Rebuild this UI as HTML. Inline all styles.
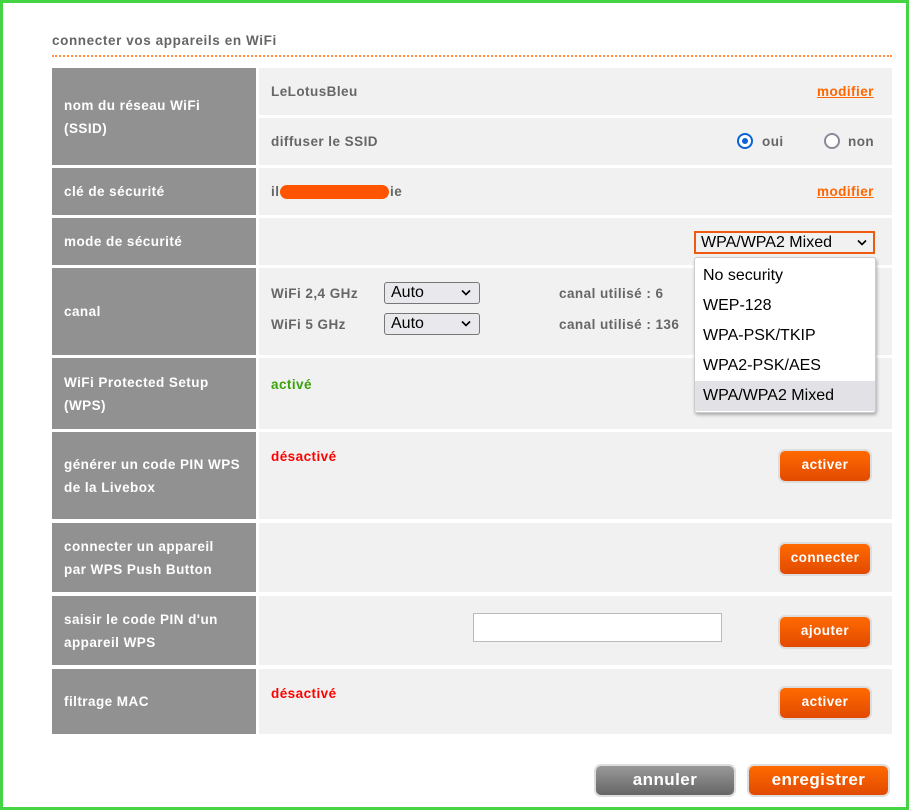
<!DOCTYPE html>
<html><head><meta charset="utf-8"><style>
*{margin:0;padding:0;box-sizing:border-box}
body{width:909px;height:810px;position:relative;background:#fff;font-family:"Liberation Sans",Arial,sans-serif;font-weight:bold;font-size:13.5px;letter-spacing:0.45px;overflow:hidden}
.frame{position:absolute;left:0;top:0;width:909px;height:810px;border:3px solid #44d444}
.a{position:absolute}
.l{position:absolute;left:52px;width:204px;background:#919191;color:#fff;padding-left:12px;line-height:23px;display:flex;align-items:center}
.v{position:absolute;left:259px;width:633px;background:#f1f1f1}
.t{position:absolute;color:#666;white-space:nowrap}
.lnk{position:absolute;color:#ff6600;text-decoration:underline;font-size:13.5px}
.btn{position:absolute;width:90px;height:30px;border-radius:5px;background:linear-gradient(#ff6a00,#e24a00);color:#fff;text-align:center;line-height:28px;font-size:13.5px;box-shadow:0 0 0 2px #ddd}
.sel{position:absolute;width:96px;height:22px;border:1px solid #777;border-radius:3px;background:#e9e9ed;font-weight:normal;font-size:16px;color:#000;padding-left:6px;line-height:20px;letter-spacing:0}
.chev{position:absolute;right:8px;top:6px;width:10px;height:7px}
.opt{height:30px;line-height:30px;padding-left:8px;font-weight:normal;font-size:16px;color:#000;letter-spacing:0}
</style></head><body>
<div class="frame"></div>
<div class="t" style="left:52px;top:33px;font-size:13.5px;letter-spacing:0.6px">connecter vos appareils en WiFi</div>
<div class="a" style="left:52px;top:55px;width:840px;border-top:2px dotted #ff8a40"></div>

<div class="l" style="top:68px;height:97px">nom du réseau WiFi<br>(SSID)</div>
<div class="v" style="top:68px;height:47px"></div>
<div class="t" style="left:271px;top:84px">LeLotusBleu</div>
<div class="lnk" style="left:817px;top:84px">modifier</div>
<div class="v" style="top:118px;height:47px"></div>
<div class="t" style="left:271px;top:134px">diffuser le SSID</div>
<div class="a" style="left:737px;top:133px;width:16px;height:16px;border-radius:50%;border:2px solid #0b62d6;background:#fff"><div class="a" style="left:3px;top:3px;width:6px;height:6px;border-radius:50%;background:#0b62d6"></div></div>
<div class="t" style="left:762px;top:134px">oui</div>
<div class="a" style="left:824px;top:133px;width:16px;height:16px;border-radius:50%;border:2px solid #8a8a96;background:#fff"></div>
<div class="t" style="left:848px;top:134px">non</div>

<div class="l" style="top:168px;height:47px">clé de sécurité</div>
<div class="v" style="top:168px;height:47px"></div>
<div class="t" style="left:271px;top:184px">il</div>
<div class="a" style="left:280px;top:185px;width:109px;height:14px;border-radius:7px;background:#ff5500"></div>
<div class="t" style="left:390px;top:184px">ie</div>
<div class="lnk" style="left:817px;top:184px">modifier</div>

<div class="l" style="top:218px;height:47px">mode de sécurité</div>
<div class="v" style="top:218px;height:47px"></div>

<div class="l" style="top:268px;height:87px">canal</div>
<div class="v" style="top:268px;height:87px"></div>
<div class="t" style="left:271px;top:286px">WiFi 2,4 GHz</div>
<div class="sel" style="left:384px;top:282px">Auto<svg class="chev" viewBox="0 0 10 7"><path d="M1 1.5L5 5.5L9 1.5" stroke="#000" stroke-width="1.6" fill="none"/></svg></div>
<div class="t" style="left:559px;top:286px">canal utilisé : 6</div>
<div class="t" style="left:271px;top:317px">WiFi 5 GHz</div>
<div class="sel" style="left:384px;top:313px">Auto<svg class="chev" viewBox="0 0 10 7"><path d="M1 1.5L5 5.5L9 1.5" stroke="#000" stroke-width="1.6" fill="none"/></svg></div>
<div class="t" style="left:559px;top:317px">canal utilisé : 136</div>

<div class="l" style="top:358px;height:71px">WiFi Protected Setup<br>(WPS)</div>
<div class="v" style="top:358px;height:71px"></div>
<div class="t" style="left:271px;top:377px;color:#3aa10b">activé</div>

<div class="l" style="top:432px;height:87px">générer un code PIN WPS<br>de la Livebox</div>
<div class="v" style="top:432px;height:87px"></div>
<div class="t" style="left:271px;top:449px;color:#f00">désactivé</div>
<div class="btn" style="left:780px;top:451px">activer</div>

<div class="l" style="top:523px;height:69px">connecter un appareil<br>par WPS Push Button</div>
<div class="v" style="top:523px;height:69px"></div>
<div class="btn" style="left:780px;top:544px">connecter</div>

<div class="l" style="top:596px;height:69px">saisir le code PIN d'un<br>appareil WPS</div>
<div class="v" style="top:596px;height:69px"></div>
<div class="a" style="left:473px;top:613px;width:249px;height:29px;background:#fff;border:1px solid #bbb"></div>
<div class="btn" style="left:780px;top:617px">ajouter</div>

<div class="l" style="top:669px;height:65px">filtrage MAC</div>
<div class="v" style="top:669px;height:65px"></div>
<div class="t" style="left:271px;top:686px;color:#f00">désactivé</div>
<div class="btn" style="left:780px;top:688px">activer</div>

<div class="btn" style="left:596px;top:766px;width:138px;height:29px;background:linear-gradient(#999,#666);font-size:17px">annuler</div>
<div class="btn" style="left:749px;top:766px;width:139px;height:29px;font-size:17px">enregistrer</div>

<div class="a" style="left:694px;top:231px;width:181px;height:23px;border:2px solid #f05a10;background:#f1f1f1;font-weight:normal;font-size:16px;color:#000;padding-left:5px;line-height:19px;letter-spacing:0">WPA/WPA2 Mixed<svg class="chev" style="right:6px;top:6px" viewBox="0 0 10 7"><path d="M1 1.5L5 5.5L9 1.5" stroke="#000" stroke-width="1.6" fill="none"/></svg></div>
<div class="a" style="left:694px;top:257px;width:182px;height:156px;background:#fff;border:1px solid #ccc;border-radius:3px;box-shadow:1px 2px 3px rgba(0,0,0,.3);padding-top:3px">
<div class="opt">No security</div><div class="opt">WEP-128</div><div class="opt">WPA-PSK/TKIP</div><div class="opt">WPA2-PSK/AES</div><div class="opt" style="background:#e1e1e6">WPA/WPA2 Mixed</div>
</div>
</body></html>
